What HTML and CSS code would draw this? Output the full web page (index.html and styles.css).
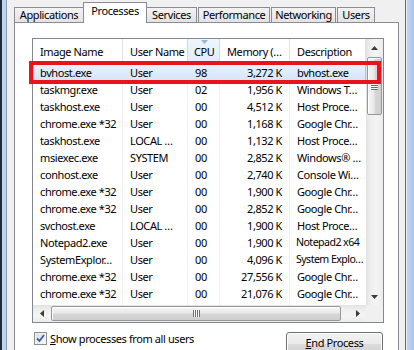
FILE: index.html
```html
<!DOCTYPE html>
<html>
<head>
<meta charset="utf-8">
<link rel="stylesheet" href="styles.css">
</head>
<body>
<div class="frame-l"></div>
<div class="main">
  <div class="tabs">
    <div class="tab t-app">Applications</div>
    <div class="tab sel t-proc">Processes</div>
    <div class="tab t-svc">Services</div>
    <div class="tab t-perf">Performance</div>
    <div class="tab t-net">Networking</div>
    <div class="tab t-usr">Users</div>
  </div>
  <div class="panel">
    <div class="list">
      <div class="table">
        <div class="head">
          <div class="hc">Image Name</div>
          <div class="hc">User Name</div>
          <div class="hc sorted"><svg class="sort" width="7" height="4" viewBox="0 0 7 4"><polygon points="0,0 7,0 3.5,4" fill="#9bb6d6"/></svg>CPU</div>
          <div class="hc">Memory (…</div>
          <div class="hc">Description</div>
        </div>
        <div class="rows">
          <div class="row selrow"><span>bvhost.exe</span><span>User</span><span>98</span><span class="num">3,272 K</span><span>bvhost.exe</span></div>
          <div class="row"><span>taskmgr.exe</span><span>User</span><span>02</span><span class="num">1,956 K</span><span>Windows T…</span></div>
          <div class="row"><span>taskhost.exe</span><span>User</span><span>00</span><span class="num">4,512 K</span><span>Host Proce…</span></div>
          <div class="row"><span>chrome.exe *32</span><span>User</span><span>00</span><span class="num">1,168 K</span><span>Google Chr…</span></div>
          <div class="row"><span>taskhost.exe</span><span>LOCAL …</span><span>00</span><span class="num">1,132 K</span><span>Host Proce…</span></div>
          <div class="row"><span>msiexec.exe</span><span>SYSTEM</span><span>00</span><span class="num">2,852 K</span><span>Windows® …</span></div>
          <div class="row"><span>conhost.exe</span><span>User</span><span>00</span><span class="num">2,740 K</span><span>Console Wi…</span></div>
          <div class="row"><span>chrome.exe *32</span><span>User</span><span>00</span><span class="num">1,900 K</span><span>Google Chr…</span></div>
          <div class="row"><span>chrome.exe *32</span><span>User</span><span>00</span><span class="num">2,852 K</span><span>Google Chr…</span></div>
          <div class="row"><span>svchost.exe</span><span>LOCAL …</span><span>00</span><span class="num">1,900 K</span><span>Host Proce…</span></div>
          <div class="row"><span>Notepad2.exe</span><span>User</span><span>00</span><span class="num">1,900 K</span><span class="tight">Notepad2 x64</span></div>
          <div class="row"><span>SystemExplor…</span><span>User</span><span>00</span><span class="num">4,096 K</span><span class="tight">System Explo…</span></div>
          <div class="row"><span>chrome.exe *32</span><span>User</span><span>00</span><span class="num">27,556 K</span><span>Google Chr…</span></div>
          <div class="row"><span>chrome.exe *32</span><span>User</span><span>00</span><span class="num">21,076 K</span><span>Google Chr…</span></div>
          <div class="row"><span></span><span></span><span></span><span class="num"></span><span></span></div>
        </div>
      </div>
      <div class="vscroll">
        <div class="arr"><svg width="7" height="4" viewBox="0 0 7 4"><polygon points="0,4 3.5,0 7,4" fill="#3a3a3a"/></svg></div>
        <div class="vthumb"><div class="vgrip"></div></div>
        <div class="fill"></div>
        <div class="arr"><svg width="7" height="4" viewBox="0 0 7 4"><polygon points="0,0 7,0 3.5,4" fill="#3a3a3a"/></svg></div>
      </div>
      <div class="hscroll">
        <div class="arr"><svg width="4" height="7" viewBox="0 0 4 7"><polygon points="4,0 4,7 0,3.5" fill="#3a3a3a"/></svg></div>
        <div class="hthumb"><div class="hgrip"></div></div>
        <div class="fill"></div>
        <div class="arr"><svg width="4" height="7" viewBox="0 0 4 7"><polygon points="0,0 0,7 4,3.5" fill="#3a3a3a"/></svg></div>
      </div>
      <div class="corner"></div>
      <div class="redbox"></div>
    </div>
    <div class="footer">
      <div class="check">
        <span class="box"><svg width="9" height="9" viewBox="0 0 9 9"><path d="M1 4.5 L3.5 7 L8 1" fill="none" stroke="#3d5aa8" stroke-width="1.8"/></svg></span>
        <span class="lbl"><u>S</u>how processes from all users</span>
      </div>
      <div class="btn"><u>E</u>nd Process</div>
    </div>
  </div>
</div>
<div class="frame-r"></div>
</body>
</html>
```

FILE: styles.css
```css
* { box-sizing: border-box; }
html, body { margin: 0; padding: 0; }
body {
  width: 414px;
  height: 350px;
  overflow: hidden;
  display: flex;
  font-family: "Noto Sans", sans-serif;
  font-size: 11px;
  letter-spacing: -0.4px;
  color: #000;
  background: #f0f0f0;
}
.frame-l {
  width: 7px;
  flex: none;
  background: linear-gradient(to right, #1e2b3f 0 2px, #bfd3ea 2px 6px, #8d9bb0 6px 7px);
}
.main {
  width: 398px;
  flex: none;
  padding: 2px 6px 0 7px;
  background: #f0f0f0;
}
.frame-r {
  flex: 1;
  background: linear-gradient(to right, #5a687b 0 1px, #e6f0fa 1px 2px, #bfd5ec 2px, #a9c5e6);
}

/* tabs */
.tabs {
  display: flex;
  align-items: flex-end;
  height: 21px;
  margin-bottom: -1px;
  position: relative;
  z-index: 1;
}
.tab {
  height: 15px;
  margin-bottom: 1px;
  border: 1px solid #898c95;
  border-bottom: none;
  background: linear-gradient(#f3f3f3, #e3e3e3);
  text-align: center;
  line-height: 13px;
  white-space: nowrap;
}
.tab.sel {
  height: 21px;
  margin-bottom: 0;
  background: #fff;
  line-height: 16px;
  position: relative;
}
.t-app { width: 70px; }
.t-proc { width: 64px; margin-left: -1px; }
.t-svc { width: 51px; margin-left: -1px; }
.t-perf { width: 72px; margin-left: 1px; }
.t-net { width: 65px; margin-left: 1px; }
.t-usr { width: 38px; margin-left: 1px; }

/* panel */
.panel {
  border: 1px solid #898c95;
  background: #fff;
  padding: 15px 14px 0 17px;
  height: 340px;
}

/* list */
.list {
  position: relative;
  width: 352px;
  height: 285px;
  border: 1px solid #828790;
  display: grid;
  grid-template-columns: 333px 17px;
  grid-template-rows: 266px 17px;
  background: #fff;
}
.table { overflow: hidden; }
.head, .row {
  display: grid;
  grid-template-columns: 90px 65px 32px 70px 76px;
}
.head { height: 25px; }
.hc {
  border-right: 1px solid #e3e3e3;
  padding-left: 7px;
  line-height: 25px;
  white-space: nowrap;
  overflow: hidden;
}
.hc.sorted {
  background: linear-gradient(#eef6fd, #ddedfb);
  border-left: 1px solid #c3dcf2;
  border-right: 1px solid #c3dcf2;
  position: relative;
  margin-left: -1px;
  padding-left: 6px;
}
.sort {
  position: absolute;
  left: 13px;
  top: 1px;
}
.rows { height: 241px; overflow: hidden; }
.row { height: 17px; line-height: 17px; }
.row span {
  padding-left: 7px;
  border-right: 1px solid #f0f0f0;
  white-space: nowrap;
  overflow: hidden;
}
.row span.num { text-align: right; padding-left: 0; padding-right: 7px; }
.row span:last-child { border-right: none; }
.row span.tight { letter-spacing: -0.55px; font-size: 10.6px; padding-left: 6px; }
.selrow {
  background: linear-gradient(#ebf3fd, #d3e4f9);
  box-shadow: inset 0 0 0 1px #a8c6ec;
}
.selrow span { border-right-color: transparent; }

/* scrollbars */
.vscroll {
  display: flex;
  flex-direction: column;
  background: linear-gradient(to right, #e2e2e2, #eeeeee 25%, #f4f4f4 60%, #ececec);
}
.hscroll {
  display: flex;
  background: linear-gradient(#e2e2e2, #eeeeee 25%, #f4f4f4 60%, #ececec);
}
.corner { background: #f0f0f0; }
.arr {
  flex: none;
  width: 17px;
  height: 17px;
  display: flex;
  align-items: center;
  justify-content: center;
}
.fill { flex: 1; }
.vthumb {
  flex: none;
  height: 58px;
  margin: 1px 1px 0 1px;
  border: 1px solid #979797;
  border-radius: 2px;
  background: linear-gradient(to right, #f5f5f5, #e9e9e9 45%, #d6d6d6 55%, #cfcfcf);
  box-shadow: inset 1px 1px 0 #fff;
  display: flex;
  align-items: center;
  justify-content: center;
}
.vgrip {
  width: 7px;
  height: 7px;
  background: repeating-linear-gradient(#6e6e6e 0 1px, #f8f8f8 1px 2px);
}
.hthumb {
  flex: none;
  width: 290px;
  margin: 1px 0 1px 1px;
  border: 1px solid #979797;
  border-radius: 2px;
  background: linear-gradient(#f5f5f5, #e9e9e9 45%, #d6d6d6 55%, #cfcfcf);
  box-shadow: inset 1px 1px 0 #fff;
  display: flex;
  align-items: center;
  justify-content: center;
}
.hgrip {
  width: 7px;
  height: 7px;
  background: repeating-linear-gradient(to right, #6e6e6e 0 1px, #f8f8f8 1px 2px);
}
.redbox {
  position: absolute;
  left: -4px;
  top: 22px;
  width: 352px;
  height: 23px;
  border: 4px solid #e8131b;
}

/* footer */
.footer {
  display: flex;
  justify-content: space-between;
  align-items: flex-start;
  margin-top: 9px;
  padding-left: 2px;
  padding-right: 1px;
}
.check {
  display: flex;
  align-items: center;
  gap: 3px;
  height: 13px;
}
.box {
  width: 13px;
  height: 13px;
  border: 1px solid #8e8f8f;
  background: linear-gradient(135deg, #dcdcdc, #f8f8f8);
  box-shadow: inset 0 0 0 1px #f4f4f4;
  display: flex;
  align-items: center;
  justify-content: center;
}
.lbl { line-height: 13px; }
.btn {
  width: 97px;
  height: 23px;
  border: 1px solid #707070;
  border-radius: 3px;
  background: linear-gradient(#f2f2f2, #ebebeb 50%, #dddddd 51%, #cfcfcf);
  box-shadow: inset 0 0 0 1px #fcfcfc;
  text-align: center;
  line-height: 20px;
}
```
